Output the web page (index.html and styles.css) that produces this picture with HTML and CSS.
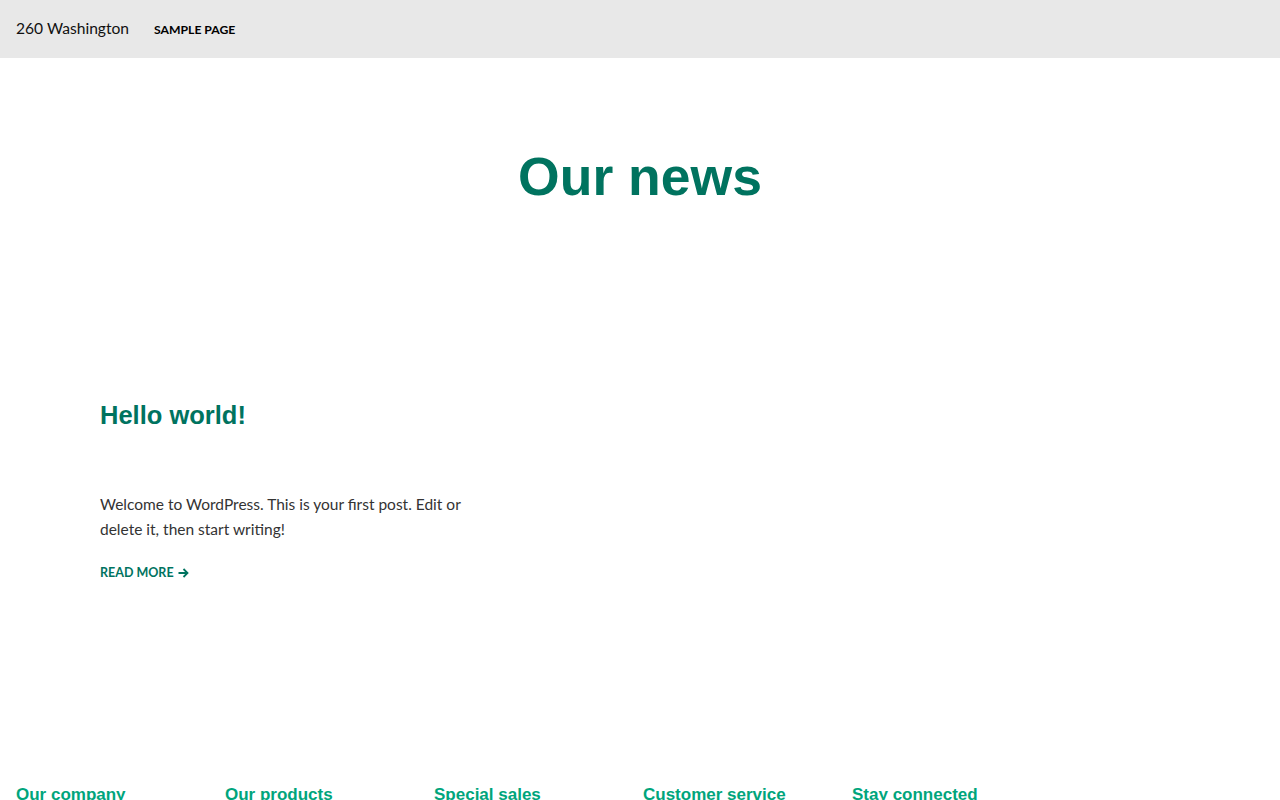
FILE: index.html
```html
<!DOCTYPE html>
<html lang="en">
<head>
<meta charset="utf-8">
<title>260 Washington</title>
<link rel="stylesheet" href="styles.css">
</head>
<body>
<header class="site-header">
  <a class="site-title" href="#">260 Washington</a>
  <nav class="site-nav"><a href="#">SAMPLE PAGE</a></nav>
</header>
<main class="main">
  <h1 class="page-title">Our news</h1>
  <section class="posts">
    <article class="post">
      <h2 class="post-title">Hello world!</h2>
      <p class="post-excerpt">Welcome to WordPress. This is your first post. Edit or delete it, then start writing!</p>
      <a class="read-more" href="#">READ MORE <svg class="arrow" width="11" height="10" viewBox="0 0 11 10" aria-hidden="true"><path d="M0.5 5H9.5M5.5 1L9.5 5L5.5 9" fill="none" stroke="currentColor" stroke-width="1.8"/></svg></a>
    </article>
  </section>
</main>
<footer class="site-footer">
  <div class="footer-col"><h3 class="footer-heading">Our company</h3></div>
  <div class="footer-col"><h3 class="footer-heading">Our products</h3></div>
  <div class="footer-col"><h3 class="footer-heading">Special sales</h3></div>
  <div class="footer-col"><h3 class="footer-heading">Customer service</h3></div>
  <div class="footer-col"><h3 class="footer-heading">Stay connected</h3></div>
  <div class="footer-col"></div>
</footer>
</body>
</html>
```
FILE: styles.css
```css
* { box-sizing: border-box; }
html, body { margin: 0; padding: 0; }
body {
  font-family: Lato, "Open Sans", sans-serif;
  color: #333333;
  background: #ffffff;
}
a { text-decoration: none; }

.site-header {
  height: 58px;
  background: #e8e8e8;
  display: flex;
  align-items: center;
  padding: 0 16px 3px;
  gap: 25px;
}
.site-title {
  color: #111111;
  font-size: 15.6px;
}
.site-nav a {
  color: #000000;
  font-size: 12.2px;
  font-weight: 700;
}

.main {
  padding: 0 100px;
}
.page-title {
  margin: 0;
  padding-top: 86px;
  text-align: center;
  font-family: "Liberation Sans", Arial, sans-serif;
  font-weight: 700;
  font-size: 53.5px;
  line-height: 66px;
  color: #00735f;
}
.posts {
  padding-top: 189px;
  display: grid;
  grid-template-columns: 380px;
}
.post-title {
  margin: 0;
  font-family: "Liberation Sans", Arial, sans-serif;
  font-weight: 700;
  font-size: 25.5px;
  line-height: 32px;
  color: #00735f;
}
.post-excerpt {
  margin: 61px 0 0;
  font-size: 15.5px;
  line-height: 25px;
}
.read-more {
  display: inline-flex;
  align-items: center;
  gap: 4px;
  margin-top: 23px;
  color: #00735f;
  font-size: 12.5px;
  font-weight: 700;
}
.arrow { display: block; }

.site-footer {
  margin-top: 205px;
  padding: 0 16px;
  display: grid;
  grid-template-columns: repeat(6, 1fr);
  gap: 6px;
}
.footer-heading {
  margin: 0;
  font-family: "Liberation Sans", Arial, sans-serif;
  font-weight: 700;
  font-size: 17px;
  color: #00a57c;
}
```
